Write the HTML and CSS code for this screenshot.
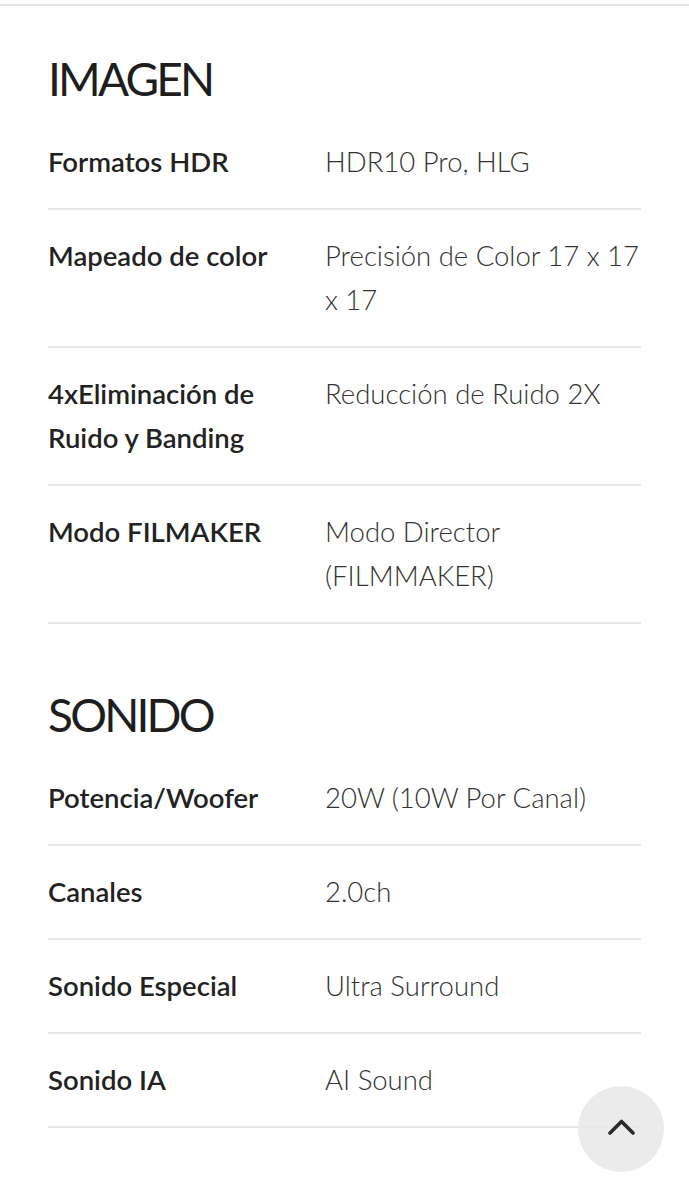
FILE: index.html
```html
<!DOCTYPE html>
<html lang="es">
<head>
  <meta charset="UTF-8">
  <title>Especificaciones</title>
  <link rel="stylesheet" href="styles.css">
</head>
<body>
  <div class="top-rule"></div>
  <main class="specs">
    <section class="spec-group">
      <h2>IMAGEN</h2>
      <dl class="spec-list">
        <div class="spec-row"><dt>Formatos HDR</dt><dd>HDR10 Pro, HLG</dd></div>
        <div class="spec-row"><dt>Mapeado de color</dt><dd>Precisión de Color 17 x 17 x 17</dd></div>
        <div class="spec-row"><dt>4xEliminación de Ruido y Banding</dt><dd>Reducción de Ruido 2X</dd></div>
        <div class="spec-row"><dt>Modo FILMAKER</dt><dd>Modo Director (FILMMAKER)</dd></div>
      </dl>
    </section>

    <section class="spec-group">
      <h2>SONIDO</h2>
      <dl class="spec-list">
        <div class="spec-row"><dt>Potencia/Woofer</dt><dd>20W (10W Por Canal)</dd></div>
        <div class="spec-row"><dt>Canales</dt><dd>2.0ch</dd></div>
        <div class="spec-row"><dt>Sonido Especial</dt><dd>Ultra Surround</dd></div>
        <div class="spec-row"><dt>Sonido IA</dt><dd>AI Sound</dd></div>
      </dl>
    </section>
  </main>

  <button class="to-top" aria-label="Volver arriba">
    <svg width="27" height="17" viewBox="0 0 27 17">
      <polyline points="2,15 13.5,3.5 25,15" fill="none" stroke="#2b2b2b" stroke-width="3.6" stroke-linecap="round" stroke-linejoin="round"/>
    </svg>
  </button>
</body>
</html>
```

FILE: styles.css
```css
body {
  margin: 0;
  background: #ffffff;
  font-family: Lato, "Noto Sans", sans-serif;
  color: #222222;
}
.top-rule {
  margin-top: 4px;
  height: 2px;
  background: #e6e6e6;
}
.specs {
  padding: 0 48px;
}
.spec-group {
  padding-top: 45px;
}
.spec-group + .spec-group {
  margin-top: 18px;
}
.spec-group h2 {
  margin: 0 0 9px;
  font-size: 46px;
  line-height: 56px;
  font-weight: 400;
  letter-spacing: -2.8px;
  color: #1e1e1e;
}
.spec-list {
  margin: 0;
}
.spec-row {
  display: grid;
  grid-template-columns: 277px 1fr;
  padding: 24px 0;
  border-bottom: 2px solid #e8e8e8;
  line-height: 44px;
}
.spec-row dt {
  font-size: 27.5px;
  font-weight: 600;
  color: #222222;
  padding-right: 12px;
}
.spec-row dd {
  margin: 0;
  font-size: 27.5px;
  font-weight: 300;
  color: #333333;
}
.to-top {
  position: fixed;
  right: 25px;
  bottom: 28px;
  width: 86px;
  height: 86px;
  border: none;
  border-radius: 50%;
  background: rgba(232, 232, 232, 0.85);
  display: flex;
  align-items: center;
  justify-content: center;
  padding: 0 0 6px;
  cursor: pointer;
}
```
